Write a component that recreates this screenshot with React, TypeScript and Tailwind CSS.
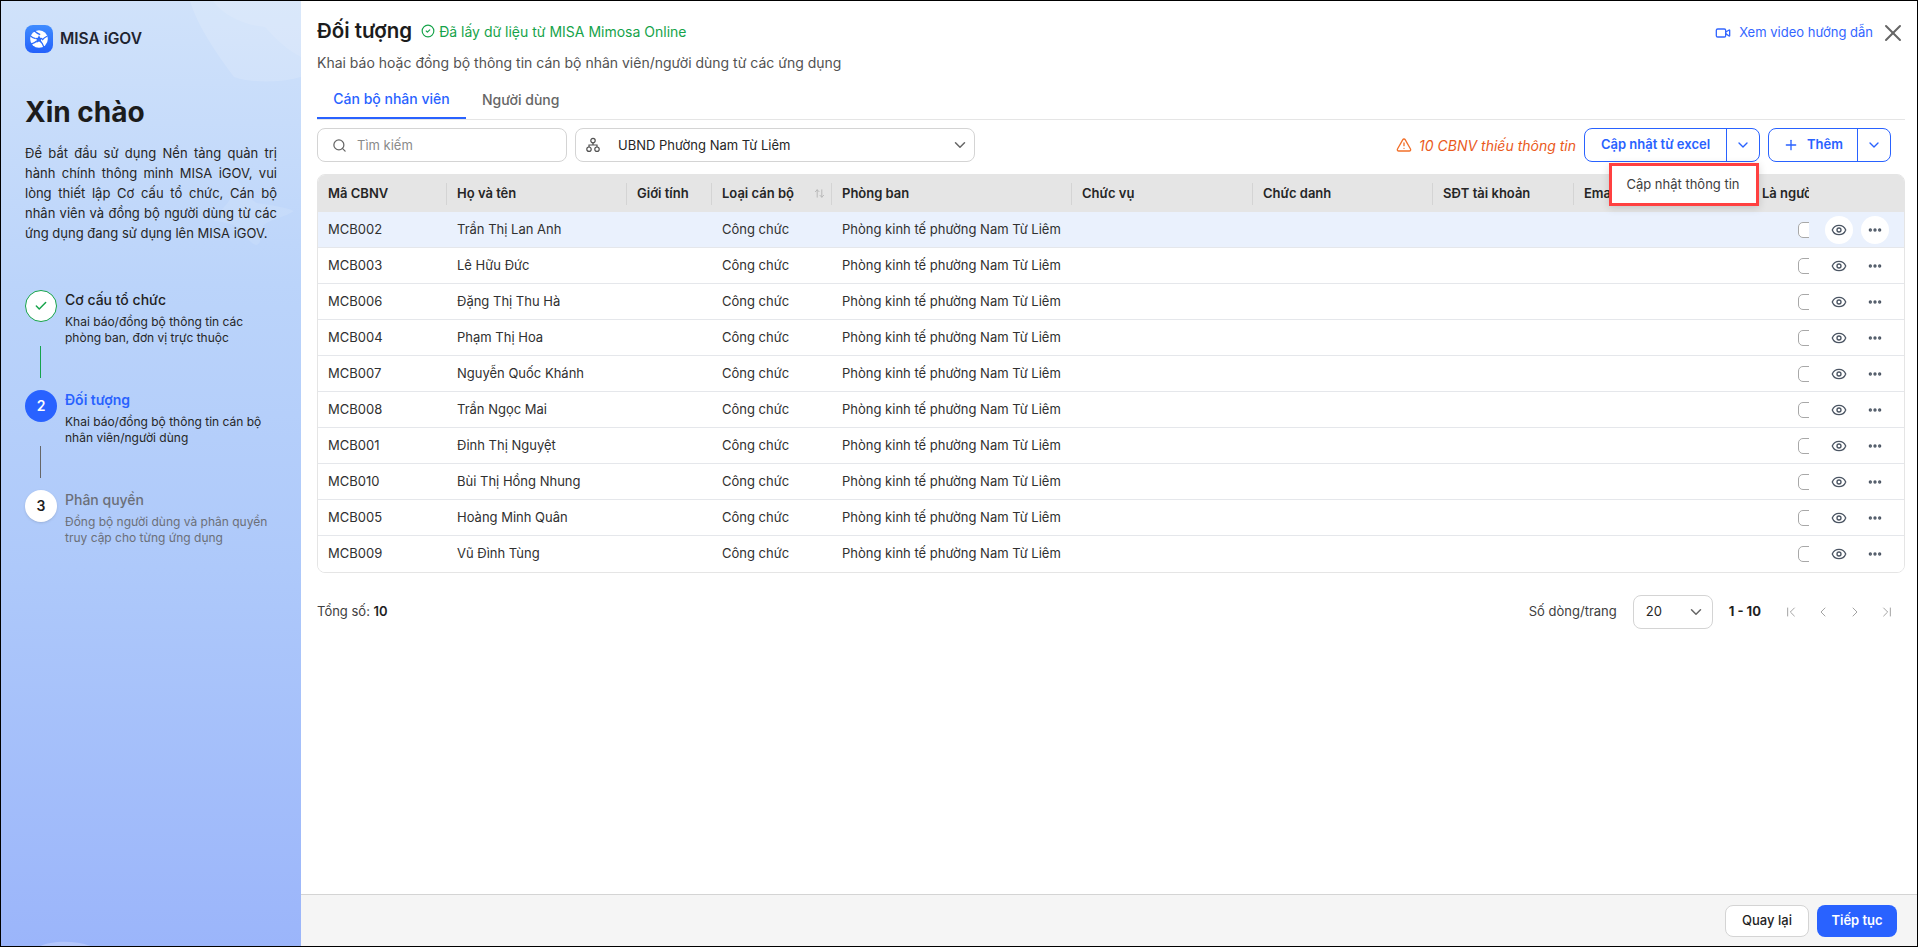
import React from "react";
import {
  Search,
  ChevronDown,
  Plus,
  Eye,
  Ellipsis,
  TriangleAlert,
  CircleCheck,
  Video,
  X,
  Check,
  ChevronFirst,
  ChevronLast,
  ChevronLeft,
  ChevronRight,
  ArrowUpDown,
} from "lucide-react";

const rows = [
  ["MCB002", "Trần Thị Lan Anh"],
  ["MCB003", "Lê Hữu Đức"],
  ["MCB006", "Đặng Thị Thu Hà"],
  ["MCB004", "Phạm Thị Hoa"],
  ["MCB007", "Nguyễn Quốc Khánh"],
  ["MCB008", "Trần Ngọc Mai"],
  ["MCB001", "Đinh Thị Nguyệt"],
  ["MCB010", "Bùi Thị Hồng Nhung"],
  ["MCB005", "Hoàng Minh Quân"],
  ["MCB009", "Vũ Đình Tùng"],
];

const gridCols =
  "grid grid-cols-[128px_180px_85px_120px_240px_181px_180px_141px_179px_57px_95px]";

const headers = [
  "Mã CBNV",
  "Họ và tên",
  "Giới tính",
  "Loại cán bộ",
  "Phòng ban",
  "Chức vụ",
  "Chức danh",
  "SĐT tài khoản",
  "Email",
];

function Logo() {
  return (
    <svg width="28" height="28" viewBox="0 0 28 28">
      <defs>
        <linearGradient id="lg" x1="0" y1="0" x2="0" y2="1">
          <stop offset="0" stopColor="#3f8cff" />
          <stop offset="1" stopColor="#2461fb" />
        </linearGradient>
      </defs>
      <rect width="28" height="28" rx="8" fill="url(#lg)" />
      <circle cx="14" cy="14" r="8.8" fill="#fff" />
      <path d="M14 10.2l1.2 2.6 2.8.3-2.1 1.9.6 2.8-2.5-1.4-2.5 1.4.6-2.8-2.1-1.9 2.8-.3z" fill="#2c6cfd" />
      <path d="M9 5.5c2 2 4 3.4 6.2 4.2M22.5 11c-2.4 1-4.2 2.4-5.4 4.2M18.8 22c-.8-2.6-2-4.6-3.6-6M6 19.2c2.4-.6 4.4-1.8 6-3.4M5.2 10.6c1.6 1.8 3.2 2.6 5.4 3" stroke="#2c6cfd" strokeWidth="1.3" fill="none" />
    </svg>
  );
}

function Step({
  badge,
  title,
  titleCls,
  desc,
  descCls,
  circleCls,
}: {
  badge: React.ReactNode;
  title: string;
  titleCls: string;
  desc: React.ReactNode;
  descCls: string;
  circleCls: string;
}) {
  return (
    <div className="flex gap-2">
      <div className={`flex h-8 w-8 shrink-0 items-center justify-center rounded-full text-sm font-semibold ${circleCls}`}>
        {badge}
      </div>
      <div>
        <div className={`text-[14px] leading-5 ${titleCls}`}>{title}</div>
        <div className={`mt-[4px] text-[12px] leading-4 ${descCls}`}>{desc}</div>
      </div>
    </div>
  );
}

function Sidebar() {
  return (
    <aside className="relative w-[300px] shrink-0 overflow-hidden bg-[linear-gradient(180deg,#d0e2fa_0%,#bbd4fa_30%,#aec9fa_60%,#9bb5fa_100%)] pl-6 pr-6 pt-6 text-[#1f1f1f]">
      <svg className="absolute left-0 top-0" width="300" height="946" viewBox="0 0 300 946">
        <path d="M189 0c8 26 26 52 44 76 16 6 46 6 67 0V0z" fill="#fff" opacity="0.14" />
        <path d="M212 0c10 14 30 24 52 26 12 14 24 24 36 30V0z" fill="#fff" opacity="0.1" />
        <path d="M232 172c8 10 12 24 24 30 12 2 28 4 37 8-8 6-24 8-30 14-4 8-2 20-8 20-8-2-14-16-22-20-8-2-16-4-20-4 4-10 12-14 16-22 2-8-2-18 3-26z" fill="#fff" opacity="0.1" />
        <path d="M38 946c8-6 36-8 54 0z" fill="#fff" opacity="0.25" />
      </svg>
      <div className="relative">
        <div className="flex items-center gap-[7px]">
          <Logo />
          <span className="text-[15.5px] font-semibold text-[#1f2430]">MISA iGOV</span>
        </div>
        <h1 className="mt-[40px] text-[28px] font-bold leading-[38px] text-[#1c1c1c]">Xin chào</h1>
        <p className="mt-3 w-[252px] text-justify text-[13px] leading-5 text-[#262626]">
          Để bắt đầu sử dụng Nền tảng quản trị hành chính thông minh MISA iGOV, vui lòng thiết lập Cơ cấu tổ chức, Cán bộ nhân viên và đồng bộ người dùng từ các ứng dụng đang sử dụng lên MISA iGOV.
        </p>
        <div className="mt-[47px]">
          <Step
            badge={<Check size={14} strokeWidth={2.5} className="text-[#16a34a]" />}
            circleCls="border border-[#16a34a] bg-white"
            title="Cơ cấu tổ chức"
            titleCls="font-medium text-[#1f1f1f]"
            desc={<>Khai báo/đồng bộ thông tin các<br />phòng ban, đơn vị trực thuộc</>}
            descCls="text-[#262626]"
          />
          <div className="ml-[15px] h-8 w-px bg-[#16a34a]" />
          <div className="mt-3">
            <Step
              badge="2"
              circleCls="bg-[#2962ff] text-white"
              title="Đối tượng"
              titleCls="font-semibold text-[#2962ff]"
              desc={<>Khai báo/đồng bộ thông tin cán bộ<br />nhân viên/người dùng</>}
              descCls="text-[#262626]"
            />
          </div>
          <div className="ml-[15px] h-8 w-px bg-[#666666]" />
          <div className="mt-3">
            <Step
              badge="3"
              circleCls="bg-white text-[#1f1f1f] shadow-sm"
              title="Phân quyền"
              titleCls="font-medium text-[#6b6f78]"
              desc={<>Đồng bộ người dùng và phân quyền<br />truy cập cho từng ứng dụng</>}
              descCls="text-[#6b6f78]"
            />
          </div>
        </div>
      </div>
    </aside>
  );
}

function OrgIcon() {
  return (
    <svg width="14" height="16" viewBox="0 0 14 16" fill="none" stroke="#525252" strokeWidth="1.2">
      <circle cx="7" cy="3.6" r="2.2" />
      <circle cx="3" cy="12.2" r="2.2" />
      <circle cx="11" cy="12.2" r="2.2" />
      <path d="M7 5.8v2.2M3 10V8h8v2" />
    </svg>
  );
}

function Toolbar() {
  return (
    <div className="mt-2 flex items-center pr-[14px]">
      <div className="flex h-[34px] w-[250px] items-center gap-[10px] rounded-lg border border-[#d4d4d4] pl-[14px] text-[13px] text-[#8a8a8a]">
        <Search size={15} className="text-[#666666]" />
        <span className="pt-px">Tìm kiếm</span>
      </div>
      <div className="ml-2 flex h-[34px] w-[400px] items-center rounded-lg border border-[#d4d4d4] pl-[10px] pr-[5px] text-[13px] text-[#262626]">
        <OrgIcon />
        <span className="ml-[18px] flex-1 pt-px">UBND Phường Nam Từ Liêm</span>
        <ChevronDown size={18} className="text-[#666666]" />
      </div>
      <div className="ml-auto flex items-center gap-[7px] text-[14px] italic text-[#ea5a1c]">
        <TriangleAlert size={16} className="text-[#f2702a]" />
        <span>10 CBNV thiếu thông tin</span>
      </div>
      <div className="relative ml-2 flex h-[34px] w-[176px] rounded-lg border border-[#2962ff] text-[#2962ff]">
        <div className="flex w-[142px] items-center justify-center border-r border-[#2962ff] text-[13px] font-semibold">
          Cập nhật từ excel
        </div>
        <div className="flex flex-1 items-center justify-center">
          <ChevronDown size={16} />
        </div>
        <div className="absolute left-[24px] top-[34px] z-10 flex h-[43px] w-[150px] items-center justify-center border-[3px] border-[#ff4040] bg-white pr-[2px] text-[13px] text-[#404040] shadow-[0_2px_8px_rgba(0,0,0,0.15)]">
          Cập nhật thông tin
        </div>
      </div>
      <div className="ml-2 flex h-[34px] w-[123px] rounded-lg border border-[#2962ff] text-[#2962ff]">
        <div className="flex w-[89px] items-center justify-center gap-2 border-r border-[#2962ff] text-[13px] font-semibold">
          <Plus size={16} />
          Thêm
        </div>
        <div className="flex flex-1 items-center justify-center">
          <ChevronDown size={16} />
        </div>
      </div>
    </div>
  );
}

function Table() {
  return (
    <div className="mt-3 overflow-hidden rounded-lg border border-[#e5e5e5] text-[13px]">
      <div className={`${gridCols} h-[37px] bg-[#e5e5e5] font-semibold text-[#262626]`}>
        {headers.map((h, i) => (
          <div key={h} className="flex items-center">
            {i > 0 && <div className="h-[22px] w-px bg-[#d4d4d4]" />}
            <span className="flex-1 whitespace-nowrap pl-[10px]">{h}</span>
            {h === "Loại cán bộ" && <ArrowUpDown size={11} className="mr-[6px] text-[#b5b5b5]" />}
          </div>
        ))}
        <div className="flex items-center overflow-hidden whitespace-nowrap pl-[10px]">Là người dùng</div>
        <div className="bg-[#e5e5e5]" />
      </div>
      {rows.map((r, i) => (
        <div
          key={r[0]}
          className={`${gridCols} h-9 items-center text-[#303030] ${i === 0 ? "bg-[#eaf1fd]" : "bg-white"} ${i < rows.length - 1 ? "border-b border-[#e5e7eb]" : ""}`}
        >
          <div className="pl-[10px]">{r[0]}</div>
          <div className="pl-[11px]">{r[1]}</div>
          <div />
          <div className="pl-[11px]">Công chức</div>
          <div className="whitespace-nowrap pl-[11px]">Phòng kinh tế phường Nam Từ Liêm</div>
          <div />
          <div />
          <div />
          <div />
          <div className="flex justify-start overflow-hidden pl-[46px]">
            <div className="h-4 w-4 shrink-0 rounded-[5px] border border-[#a8a8a8] bg-white" />
          </div>
          <div className="flex items-center gap-2 pl-4">
            <div className={`flex h-7 w-7 items-center justify-center rounded-full ${i === 0 ? "bg-white" : ""}`}>
              <Eye size={16} strokeWidth={2} className="text-[#4b5563]" />
            </div>
            <div className={`flex h-7 w-7 items-center justify-center rounded-full ${i === 0 ? "bg-white" : ""}`}>
              <Ellipsis size={16} strokeWidth={3} className="text-[#4b5563]" />
            </div>
          </div>
        </div>
      ))}
    </div>
  );
}

function Pagination() {
  return (
    <div className="mt-[22px] flex items-center pr-[10px] text-[13px]">
      <div className="text-[#404040]">
        Tổng số: <span className="font-semibold text-[#1f1f1f]">10</span>
      </div>
      <div className="ml-auto text-[#404040]">Số dòng/trang</div>
      <div className="ml-4 flex h-[34px] w-20 items-center justify-between rounded-lg border border-[#d4d4d4] pl-3 pr-[7px] text-[#262626]">
        <span>20</span>
        <ChevronDown size={18} className="text-[#666666]" />
      </div>
      <div className="ml-4 font-bold text-[#1f1f1f]">1 - 10</div>
      <div className="ml-[22px] flex items-center gap-4 text-[#a3a3a3]">
        <ChevronFirst size={16} strokeWidth={1.5} />
        <ChevronLeft size={16} strokeWidth={1.5} />
        <ChevronRight size={16} strokeWidth={1.5} />
        <ChevronLast size={16} strokeWidth={1.5} />
      </div>
    </div>
  );
}

export default function App() {
  return (
    <div className="h-[948px] w-[1922px] bg-white" style={{ fontFamily: "Inter, 'Noto Sans', sans-serif" }}>
      <div className="flex h-[947px] w-[1918px] border border-black">
        <Sidebar />
        <main className="flex min-w-0 flex-1 flex-col">
          <div className="flex-1 pl-4 pr-3">
            <div className="mt-4 flex h-7 items-center">
              <h2 className="text-[20.5px] font-semibold leading-7 text-[#1c1c1c]">Đối tượng</h2>
              <CircleCheck size={14} className="ml-[9px] text-[#16a34a]" />
              <span className="ml-[4px] pt-px text-[14px] text-[#16a34a]">Đã lấy dữ liệu từ MISA Mimosa Online</span>
              <div className="-mr-[2px] ml-auto mt-1 flex items-center text-[13px] text-[#3366ff]">
                <Video size={16} className="mr-2" />
                <span>Xem video hướng dẫn</span>
                <X size={28} strokeWidth={1.7} className="ml-[6px] text-[#666666]" />
              </div>
            </div>
            <div className="mt-2 text-[14px] leading-5 text-[#525252]">
              Khai báo hoặc đồng bộ thông tin cán bộ nhân viên/người dùng từ các ứng dụng
            </div>
            <div className="mt-[7px] flex h-10 border-b border-[#e5e5e5] text-[14px] font-medium">
              <div className="flex w-[149px] items-center justify-center border-b-2 border-[#2962ff] text-[#2962ff]">Cán bộ nhân viên</div>
              <div className="flex items-center px-4 text-[#666666]">Người dùng</div>
            </div>
            <Toolbar />
            <Table />
            <Pagination />
          </div>
          <footer className="flex h-[52px] items-center justify-end gap-2 border-t border-[#d4d4d4] bg-[#f5f5f5] pr-5">
            <button className="flex h-8 w-[84px] items-center justify-center rounded-lg border border-[#d4d4d4] bg-white text-[13px] font-medium text-[#1f1f1f]">
              Quay lại
            </button>
            <button className="flex h-8 w-20 items-center justify-center rounded-lg bg-[#2962ff] text-[13px] font-semibold text-white">
              Tiếp tục
            </button>
          </footer>
        </main>
      </div>
    </div>
  );
}
